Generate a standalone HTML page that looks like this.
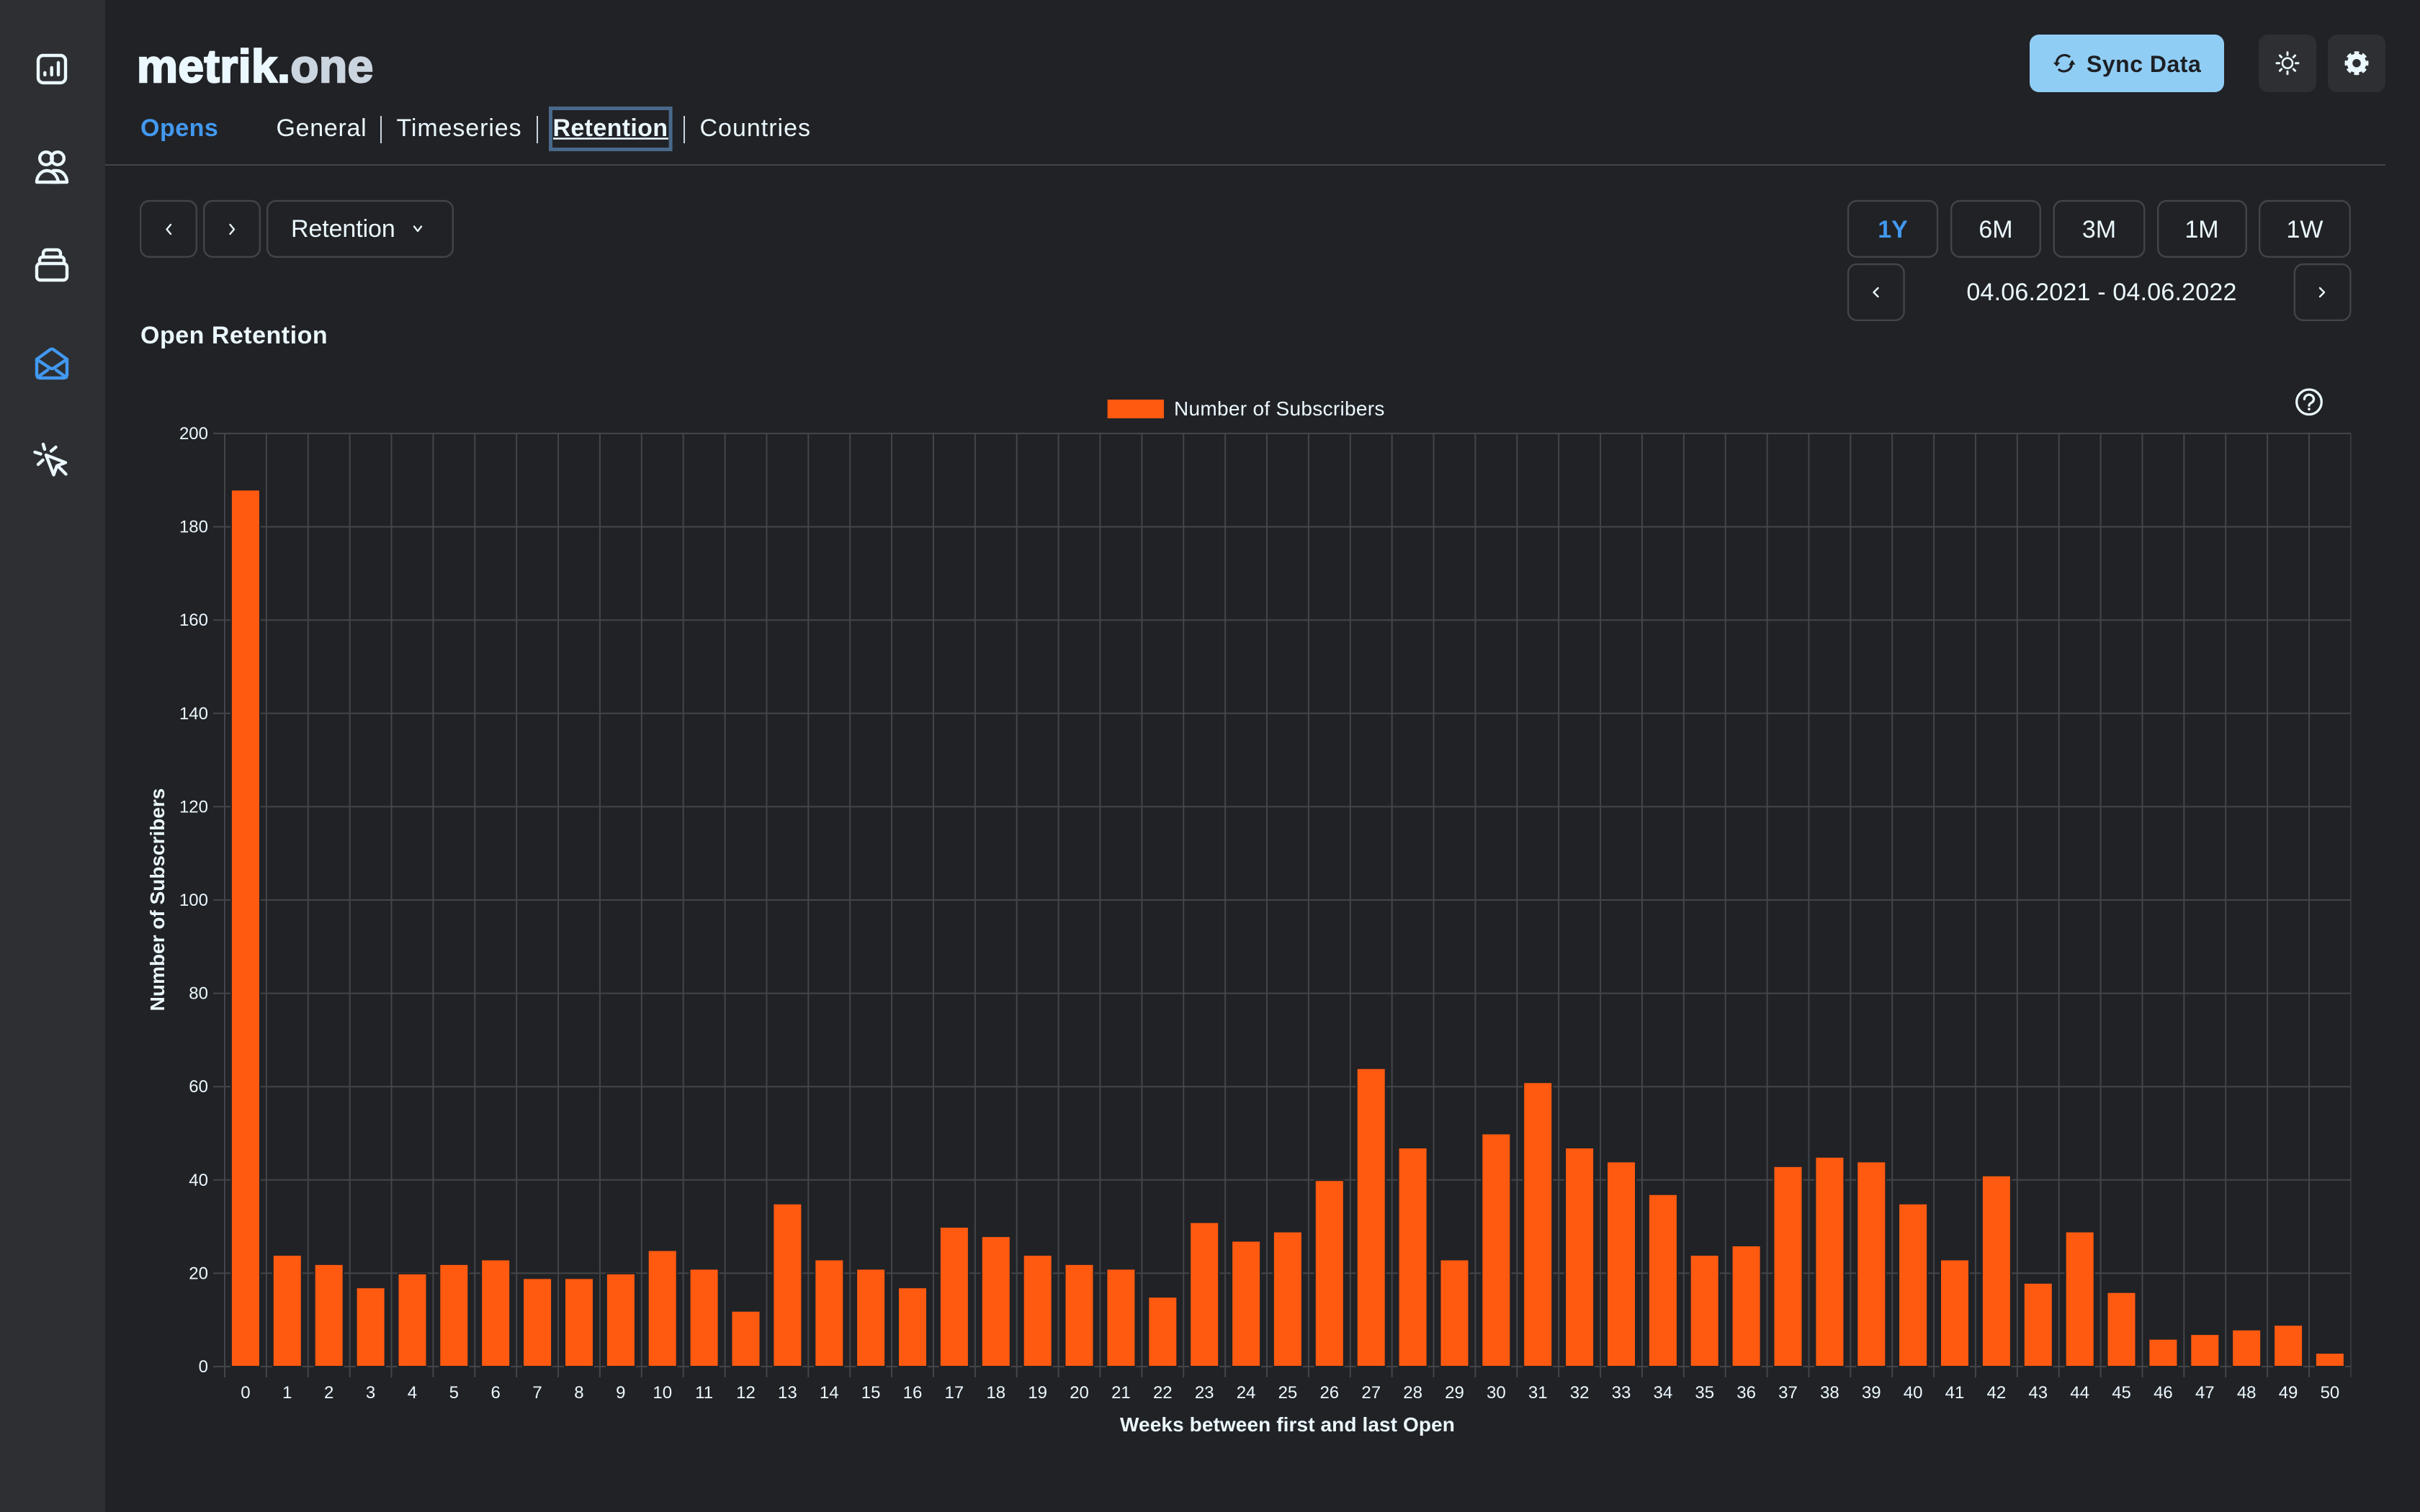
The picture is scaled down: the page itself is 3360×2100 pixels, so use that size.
<!DOCTYPE html>
<html lang="en">
<head>
<meta charset="utf-8">
<title>metrik.one</title>
<style>
html,body{margin:0;padding:0;background:#212226;width:3360px;height:2100px;overflow:hidden}
svg{display:block}
text{font-family:"Liberation Sans",Arial,sans-serif;fill:#ebf8ff}
.n{font-size:34px}
.b{font-size:34px;font-weight:700}
.t{font-size:24px}
.m{text-anchor:middle}
.e{text-anchor:end}
.h{font-size:28px;font-weight:700}
.btn{fill:none;stroke:#434448;stroke-width:2.4}
.ic{fill:none;stroke:#ebf8ff;stroke-width:4.4;stroke-linecap:round;stroke-linejoin:round}
.ch{fill:none;stroke:#ebf8ff;stroke-width:2.3;stroke-linecap:round;stroke-linejoin:round}
</style>
</head>
<body>
<svg xmlns="http://www.w3.org/2000/svg" width="3360" height="2100" viewBox="0 0 3360 2100">
<rect width="3360" height="2100" fill="#212226"/>
<rect width="146" height="2100" fill="#2d2f33"/>

<!-- sidebar icons -->
<rect class="ic" x="53" y="77" width="38" height="38" rx="7"/>
<path class="ic" d="M62.3 101V104M71.7 94V104M81 87V104"/>

<circle class="ic" cx="80" cy="220" r="8.8"/>
<path class="ic" d="M74 237H79C87 237 93 245 93 253H70"/>
<circle class="ic" cx="64" cy="220" r="8.8"/>
<path class="ic" d="M51 253C51 245 57 237 65 237C74 237 80 245 81 253Z"/>

<rect class="ic" x="51" y="366" width="42" height="23" rx="5"/>
<path class="ic" d="M55 365V361A4 4 0 0 1 59 357H85A4 4 0 0 1 89 361V365"/>
<path class="ic" d="M60 356V352A5 5 0 0 1 65 347H79A5 5 0 0 1 84 352V356"/>

<g class="ic" style="stroke:#4299f0">
<path d="M51 499L69 486Q72 483.500 75 486L93 499V520A5 5 0 0 1 88 525H56A5 5 0 0 1 51 520Z"/>
<path d="M51 499L69 511Q72 513 75 511L93 499"/>
<path d="M52 524L66 514M92 524L78 514"/>
</g>

<path class="ic" d="M64 632L91 642.500L79 647L74.500 659.500Z"/>
<path class="ic" d="M80 647L91.500 658.500M60 617L62 624M77.500 621L71 626.500M48.500 628L56.500 630.500M59.500 639L53 645"/>

<!-- header -->
<text x="190" y="114" font-size="64" font-weight="700" letter-spacing=".5" style="fill:#ebf8ff;stroke:#ebf8ff;stroke-width:2.4">metrik.<tspan style="fill:#cbd5e0;stroke:#cbd5e0">one</tspan></text>

<text class="b" x="195" y="189" letter-spacing=".5" style="fill:#4299f0">Opens</text>
<text class="n" x="383.500" y="189" letter-spacing=".7">General</text>
<text class="n" x="550.500" y="189" letter-spacing=".9">Timeseries</text>
<text class="b" x="767.500" y="189" letter-spacing=".35">Retention</text>
<text class="n" x="971.500" y="189" letter-spacing="1">Countries</text>
<path d="M529 161V199M746 161V199M950 161V199" stroke="#cbd5e0" stroke-width="2" fill="none"/>
<path d="M768 192.500H928" stroke="#ebf8ff" stroke-width="2.600" fill="none"/>
<rect x="764.500" y="150.500" width="166.600" height="57" fill="none" stroke="#49698a" stroke-width="5"/>
<path d="M146 229H3312" stroke="#44454a" stroke-width="2" fill="none"/>

<!-- sync -->
<rect x="2818" y="48" width="270" height="80" rx="13" fill="#90cdf4"/>
<g transform="translate(2866 87.500)">
<path d="M-10.500 0A11 11 0 0 1 8 -8M10.500 2A11 11 0 0 1 -8 8.500" fill="none" stroke="#1d1f24" stroke-width="3.200"/>
<path d="M-15.200 -0.800H-5.800L-10.300 4.800ZM6.200 3.300L15.400 2L11 -4.500Z" fill="#1d1f24"/>
</g>
<text x="2897" y="100" font-size="32" font-weight="700" letter-spacing=".5" style="fill:#1d1f24">Sync Data</text>

<rect x="3136" y="48" width="80" height="80" rx="13" fill="#2d2f33"/>
<rect x="3232" y="48" width="80" height="80" rx="13" fill="#2d2f33"/>
<g transform="translate(3176 87.700)" fill="none" stroke="#ebf8ff" stroke-linecap="round">
<circle r="7" stroke-width="2.600"/>
<path d="M0 -15V-11.500M0 15V11.500M-15 0H-11.500M15 0H11.500M-10.600 -10.600L-8.300 -8.300M10.600 -10.600L8.300 -8.300M-10.600 10.600L-8.300 8.300M10.600 10.600L8.300 8.300" stroke-width="3"/>
</g>
<g transform="translate(3272 87.700)" fill="none" stroke="#ebf8ff">
<circle r="9.500" stroke-width="7.500"/>
<circle r="14" stroke-width="5" stroke-dasharray="6.500 4.496" stroke-dashoffset="3.250" transform="rotate(-90)"/>
</g>

<!-- left controls -->
<rect class="btn" x="195.200" y="279" width="77.600" height="77.800" rx="12"/>
<rect class="btn" x="283.200" y="279" width="77.600" height="77.800" rx="12"/>
<rect class="btn" x="371.200" y="279" width="257.600" height="77.800" rx="12"/>
<path class="ch" d="M237 312L231.500 318.500L237 325M319.500 312L325 318.500L319.500 325M575 314.500L580 321L585 314.500"/>
<text class="n" x="404" y="329" letter-spacing="-.1">Retention</text>
<text class="b" x="195" y="477" letter-spacing=".5">Open Retention</text>

<!-- right controls -->
<rect class="btn" x="2566" y="279" width="124" height="77.800" rx="12"/>
<rect class="btn" x="2709.200" y="279" width="123.600" height="77.800" rx="12"/>
<rect class="btn" x="2851.700" y="279" width="125.600" height="77.800" rx="12"/>
<rect class="btn" x="2996.200" y="279" width="122.600" height="77.800" rx="12"/>
<rect class="btn" x="3137.200" y="279" width="125.600" height="77.800" rx="12"/>
<text class="b m" x="2628" y="330" style="fill:#4299f0">1Y</text>
<text class="n m" x="2771" y="330">6M</text>
<text class="n m" x="2914.500" y="330">3M</text>
<text class="n m" x="3057" y="330">1M</text>
<text class="n m" x="3200" y="330">1W</text>
<rect class="btn" x="2566" y="367" width="77.600" height="77.800" rx="12"/>
<rect class="btn" x="3185.800" y="367" width="77.600" height="77.800" rx="12"/>
<path class="ch" d="M2607.500 400L2601.500 406L2607.500 412M3221 400L3227 406L3221 412"/>
<text class="n m" x="2918" y="417" letter-spacing=".2">04.06.2021 - 04.06.2022</text>

<!-- help -->
<g transform="translate(3206 558.300)" fill="none" stroke="#ebf8ff" stroke-width="3.300" stroke-linecap="round">
<circle r="17.300"/>
<path d="M-6.500 -4A6.500 6 0 1 1 3 1.200Q0 3 0 5"/>
<path d="M0 9.800V10" stroke-width="3.600"/>
</g>

<!-- legend -->
<rect x="1537.700" y="555" width="78.300" height="26" fill="#ff5a10"/>
<text x="1630" y="577" font-size="28" letter-spacing=".3">Number of Subscribers</text>

<!-- grid -->
<path fill="none" stroke="#444549" stroke-width="2" d="M296 602H3264M296 731.600H3264M296 861.200H3264M296 990.800H3264M296 1120.400H3264M296 1250H3264M296 1379.600H3264M296 1509.200H3264M296 1638.800H3264M296 1768.400H3264M296 1898H3264
M312 602V1913M369.880 602V1913M427.760 602V1913M485.640 602V1913M543.520 602V1913M601.400 602V1913M659.280 602V1913M717.160 602V1913M775.040 602V1913M832.920 602V1913M890.800 602V1913M948.680 602V1913M1006.560 602V1913M1064.440 602V1913M1122.320 602V1913M1180.200 602V1913M1238.080 602V1913M1295.960 602V1913M1353.840 602V1913M1411.720 602V1913M1469.600 602V1913M1527.480 602V1913M1585.360 602V1913M1643.240 602V1913M1701.120 602V1913M1759 602V1913M1816.880 602V1913M1874.760 602V1913M1932.640 602V1913M1990.520 602V1913M2048.400 602V1913M2106.280 602V1913M2164.160 602V1913M2222.040 602V1913M2279.920 602V1913M2337.800 602V1913M2395.680 602V1913M2453.560 602V1913M2511.440 602V1913M2569.320 602V1913M2627.200 602V1913M2685.080 602V1913M2742.960 602V1913M2800.840 602V1913M2858.720 602V1913M2916.600 602V1913M2974.480 602V1913M3032.360 602V1913M3090.240 602V1913M3148.120 602V1913M3206 602V1913"/>
<path fill="none" stroke="#444549" stroke-width="1.200" d="M3264 602V1913"/>

<!-- bars -->
<defs>
<path id="bars" d="M321.900 681.300h38V1897h-38zM379.800 1744h38V1897h-38zM437.700 1756.900h38V1897h-38zM495.600 1789.300h38V1897h-38zM553.500 1769.900h38V1897h-38zM611.300 1756.900h38V1897h-38zM669.200 1750.500h38V1897h-38zM727.100 1776.400h38V1897h-38zM785 1776.400h38V1897h-38zM842.900 1769.900h38V1897h-38zM900.700 1737.500h38V1897h-38zM958.600 1763.400h38V1897h-38zM1016.500 1821.700h38V1897h-38zM1074.400 1672.700h38V1897h-38zM1132.300 1750.500h38V1897h-38zM1190.100 1763.400h38V1897h-38zM1248 1789.300h38V1897h-38zM1305.900 1705.100h38V1897h-38zM1363.800 1718.100h38V1897h-38zM1421.700 1744h38V1897h-38zM1479.500 1756.900h38V1897h-38zM1537.400 1763.400h38V1897h-38zM1595.300 1802.300h38V1897h-38zM1653.200 1698.600h38V1897h-38zM1711.100 1724.500h38V1897h-38zM1768.900 1711.600h38V1897h-38zM1826.800 1640.300h38V1897h-38zM1884.700 1484.800h38V1897h-38zM1942.600 1595h38V1897h-38zM2000.500 1750.500h38V1897h-38zM2058.300 1575.500h38V1897h-38zM2116.200 1504.200h38V1897h-38zM2174.100 1595h38V1897h-38zM2232 1614.400h38V1897h-38zM2289.900 1659.700h38V1897h-38zM2347.700 1744h38V1897h-38zM2405.600 1731h38V1897h-38zM2463.500 1620.900h38V1897h-38zM2521.400 1607.900h38V1897h-38zM2579.300 1614.400h38V1897h-38zM2637.100 1672.700h38V1897h-38zM2695 1750.500h38V1897h-38zM2752.900 1633.800h38V1897h-38zM2810.800 1782.900h38V1897h-38zM2868.700 1711.600h38V1897h-38zM2926.500 1795.800h38V1897h-38zM2984.400 1860.600h38V1897h-38zM3042.300 1854.100h38V1897h-38zM3100.200 1847.700h38V1897h-38zM3158.100 1841.200h38V1897h-38zM3215.900 1880.100h38V1897h-38z"/>
</defs>
<use href="#bars" fill="#212226" stroke="#212226" stroke-width="4"/>
<use href="#bars" fill="#ff5a10"/>

<!-- y ticks -->
<g class="t">
<text class="t e" x="289" y="610">200</text>
<text class="t e" x="289" y="739.600">180</text>
<text class="t e" x="289" y="869.200">160</text>
<text class="t e" x="289" y="998.800">140</text>
<text class="t e" x="289" y="1128.400">120</text>
<text class="t e" x="289" y="1258">100</text>
<text class="t e" x="289" y="1387.600">80</text>
<text class="t e" x="289" y="1517.200">60</text>
<text class="t e" x="289" y="1646.800">40</text>
<text class="t e" x="289" y="1776.400">20</text>
<text class="t e" x="289" y="1906">0</text>
</g>

<!-- x ticks -->
<text class="t m" x="340.940" y="1942">0</text>
<text class="t m" x="398.820" y="1942">1</text>
<text class="t m" x="456.700" y="1942">2</text>
<text class="t m" x="514.580" y="1942">3</text>
<text class="t m" x="572.460" y="1942">4</text>
<text class="t m" x="630.340" y="1942">5</text>
<text class="t m" x="688.220" y="1942">6</text>
<text class="t m" x="746.100" y="1942">7</text>
<text class="t m" x="803.980" y="1942">8</text>
<text class="t m" x="861.860" y="1942">9</text>
<text class="t m" x="919.740" y="1942">10</text>
<text class="t m" x="977.620" y="1942">11</text>
<text class="t m" x="1035.500" y="1942">12</text>
<text class="t m" x="1093.380" y="1942">13</text>
<text class="t m" x="1151.260" y="1942">14</text>
<text class="t m" x="1209.140" y="1942">15</text>
<text class="t m" x="1267.020" y="1942">16</text>
<text class="t m" x="1324.900" y="1942">17</text>
<text class="t m" x="1382.780" y="1942">18</text>
<text class="t m" x="1440.660" y="1942">19</text>
<text class="t m" x="1498.540" y="1942">20</text>
<text class="t m" x="1556.420" y="1942">21</text>
<text class="t m" x="1614.300" y="1942">22</text>
<text class="t m" x="1672.180" y="1942">23</text>
<text class="t m" x="1730.060" y="1942">24</text>
<text class="t m" x="1787.940" y="1942">25</text>
<text class="t m" x="1845.820" y="1942">26</text>
<text class="t m" x="1903.700" y="1942">27</text>
<text class="t m" x="1961.580" y="1942">28</text>
<text class="t m" x="2019.460" y="1942">29</text>
<text class="t m" x="2077.340" y="1942">30</text>
<text class="t m" x="2135.220" y="1942">31</text>
<text class="t m" x="2193.100" y="1942">32</text>
<text class="t m" x="2250.980" y="1942">33</text>
<text class="t m" x="2308.860" y="1942">34</text>
<text class="t m" x="2366.740" y="1942">35</text>
<text class="t m" x="2424.620" y="1942">36</text>
<text class="t m" x="2482.500" y="1942">37</text>
<text class="t m" x="2540.380" y="1942">38</text>
<text class="t m" x="2598.260" y="1942">39</text>
<text class="t m" x="2656.140" y="1942">40</text>
<text class="t m" x="2714.020" y="1942">41</text>
<text class="t m" x="2771.900" y="1942">42</text>
<text class="t m" x="2829.780" y="1942">43</text>
<text class="t m" x="2887.660" y="1942">44</text>
<text class="t m" x="2945.540" y="1942">45</text>
<text class="t m" x="3003.420" y="1942">46</text>
<text class="t m" x="3061.300" y="1942">47</text>
<text class="t m" x="3119.180" y="1942">48</text>
<text class="t m" x="3177.060" y="1942">49</text>
<text class="t m" x="3234.940" y="1942">50</text>

<!-- axis titles -->
<text class="h m" x="1787.500" y="1988" letter-spacing=".1">Weeks between first and last Open</text>
<text class="h m" transform="translate(228 1249.500) rotate(-90)">Number of Subscribers</text>
</svg>
</body>
</html>
